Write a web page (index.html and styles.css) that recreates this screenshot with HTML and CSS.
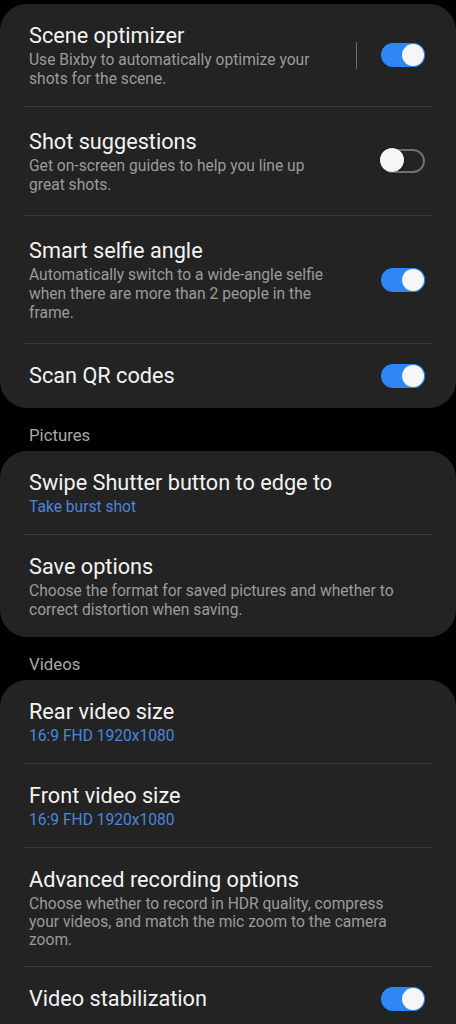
FILE: index.html
```html
<!DOCTYPE html>
<html lang="en">
<head>
    <meta charset="UTF-8">
    <meta name="viewport" content="width=device-width, initial-scale=1.0">
    <title>Camera settings</title>
    <link rel="stylesheet" href="styles.css">
</head>
<body>
    <div class="screen">
        <div class="card card-loose">
            <div class="row first">
                <div class="text">
                    <div class="title">Scene optimizer</div>
                    <div class="sub">Use Bixby to automatically optimize your shots for the scene.</div>
                </div>
                <span class="split"></span>
                <span class="switch on"></span>
            </div>
            <div class="row">
                <div class="text">
                    <div class="title">Shot suggestions</div>
                    <div class="sub">Get on-screen guides to help you line up great shots.</div>
                </div>
                <span class="switch"></span>
            </div>
            <div class="row">
                <div class="text">
                    <div class="title">Smart selfie angle</div>
                    <div class="sub">Automatically switch to a wide-angle selfie when there are more than 2 people in the frame.</div>
                </div>
                <span class="switch on"></span>
            </div>
            <div class="row last">
                <div class="text">
                    <div class="title">Scan QR codes</div>
                </div>
                <span class="switch on"></span>
            </div>
        </div>

        <div class="section">Pictures</div>
        <div class="card">
            <div class="row">
                <div class="text">
                    <div class="title">Swipe Shutter button to edge to</div>
                    <div class="sub value">Take burst shot</div>
                </div>
            </div>
            <div class="row">
                <div class="text">
                    <div class="title">Save options</div>
                    <div class="sub">Choose the format for saved pictures and whether to correct distortion when saving.</div>
                </div>
            </div>
        </div>

        <div class="section">Videos</div>
        <div class="card card-open">
            <div class="row">
                <div class="text">
                    <div class="title">Rear video size</div>
                    <div class="sub value">16:9 FHD 1920x1080</div>
                </div>
            </div>
            <div class="row">
                <div class="text">
                    <div class="title">Front video size</div>
                    <div class="sub value">16:9 FHD 1920x1080</div>
                </div>
            </div>
            <div class="row">
                <div class="text">
                    <div class="title">Advanced recording options</div>
                    <div class="sub tight">Choose whether to record in HDR quality, compress your videos, and match the mic zoom to the camera zoom.</div>
                </div>
            </div>
            <div class="row">
                <div class="text">
                    <div class="title">Video stabilization</div>
                </div>
                <span class="switch on"></span>
            </div>
        </div>
    </div>
</body>
</html>
```

FILE: styles.css
```css
/*
reset
*/
html, body {
    margin: 0;
    padding: 0;
    background: #000;
}
body {
    font-family: Roboto, "Noto Sans", "Liberation Sans", sans-serif;
    color: #f2f2f2;
    overflow: hidden;
}
/*
layout
*/
.screen {
    width: 456px;
    height: 1024px;
    padding-top: 4px;
    box-sizing: border-box;
    overflow: hidden;
}
.card {
    background: #232323;
    border-radius: 27px;
    overflow: hidden;
}
.card-open {
    padding-bottom: 40px;
}
.section {
    padding: 16px 29px 5px;
    font-size: 16.8px;
    line-height: 22px;
    color: #a9a9a9;
}
/*
rows
*/
.row {
    position: relative;
    display: flex;
    align-items: center;
    padding: 17.5px 31px 17.5px 29px;
}
.card-loose .row {
    padding-top: 20.5px;
    padding-bottom: 20.5px;
}
.card-loose .row.first {
    padding-top: 17.5px;
    padding-bottom: 17.5px;
}
.card-loose .row.last {
    padding-top: 18px;
    padding-bottom: 18px;
}
.row + .row {
    border-top: 1px solid transparent;
}
.row + .row::before {
    content: "";
    position: absolute;
    top: -1px;
    left: 24px;
    right: 23px;
    height: 1px;
    background: #3a3a3a;
}
.text {
    flex: 1;
    min-width: 0;
    padding-right: 26px;
}
.row .switch {
    margin-left: 16px;
}
.title {
    font-size: 21.7px;
    line-height: 28px;
    color: #f3f3f3;
}
.sub {
    margin-top: 1px;
    font-size: 15.6px;
    line-height: 19px;
    color: #9b9b9b;
}
.sub.tight {
    line-height: 18px;
}
.sub.value {
    color: #4a86dc;
}
/*
switches
*/
.split {
    width: 1px;
    height: 27px;
    background: #6e6e6e;
    margin-right: 8px;
}
.switch {
    position: relative;
    flex: none;
    width: 40px;
    height: 20px;
    border: 2px solid #6f6f6f;
    border-radius: 12px;
}
.switch::after {
    content: "";
    position: absolute;
    top: -3px;
    left: -3px;
    width: 24px;
    height: 24px;
    border-radius: 50%;
    background: #f6f6f6;
    box-shadow: 0 0 2px rgba(0, 0, 0, 0.6);
}
.switch.on {
    border-color: #2f86f6;
    background: #2f86f6;
}
.switch.on::after {
    left: auto;
    right: -1px;
    top: -1px;
    width: 22px;
    height: 22px;
    box-shadow: 0 0 0 1px #2f86f6;
}
```
